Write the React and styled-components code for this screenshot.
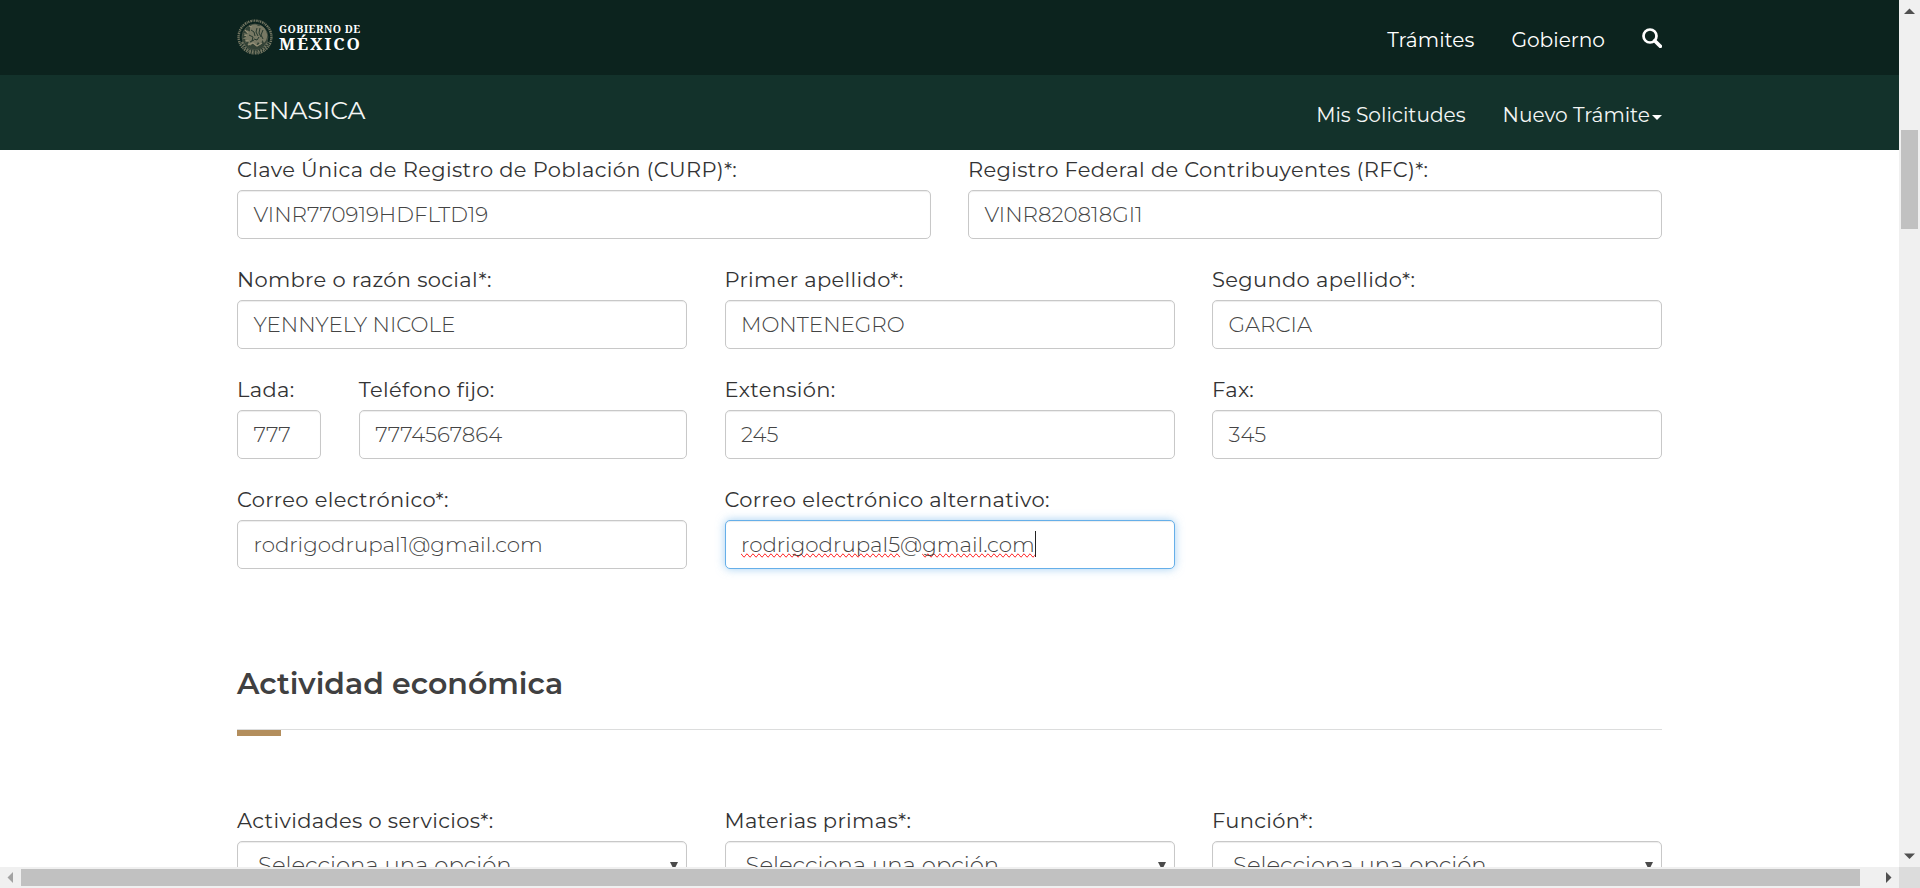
import React from 'react';
import styled, { createGlobalStyle, css } from 'styled-components';

const GlobalStyle = createGlobalStyle`
  *, *::before, *::after { box-sizing: border-box; }
  body {
    margin: 0;
    background: #fff;
    color: #404041;
    font-family: Montserrat, Inter, "Liberation Sans", sans-serif;
    overflow: hidden;
  }
`;

const tracked = css`
  letter-spacing: ${({ $track = 0 }) => $track}px;
  white-space: nowrap;
`;

const Screen = styled.div`
  display: grid;
  grid-template-columns: minmax(0, 1fr) 21px;
  grid-template-rows: minmax(0, 1fr) 21px;
  width: 100vw;
  height: 100vh;
`;

const Viewport = styled.div`
  overflow: hidden;
`;

const Container = styled.div`
  width: 1425px;
  margin: 0 auto;
`;

const TopBar = styled.header`
  height: 75px;
  background: #0c231e;
`;

const SubBar = styled.div`
  height: 75px;
  background: #13322b;
`;

const BarInner = styled(Container)`
  display: flex;
  justify-content: space-between;
  height: 100%;
`;

const Logo = styled.div`
  display: flex;
  align-items: center;
  gap: 6px;
  height: 74px;
`;

const LogoText = styled.div`
  display: flex;
  flex-direction: column;
  color: #fff;
  font-family: "Noto Serif", "DejaVu Serif", serif;
  font-weight: 700;
`;

const LogoTop = styled.span`
  ${tracked}
  font-size: 10.5px;
  line-height: 12px;
`;

const LogoBottom = styled.span`
  ${tracked}
  font-size: 17px;
  line-height: 17px;
`;

const Nav = styled.nav`
  display: flex;
  align-items: flex-start;
  gap: 37px;
  padding-top: 26px;
`;

const NavLink = styled.a`
  ${tracked}
  display: flex;
  align-items: center;
  gap: 2px;
  color: ${({ $dim }) => ($dim ? '#f4f6f5' : '#fff')};
  font-size: 20.15px;
  line-height: 27px;
`;

const SearchIcon = styled.svg`
  width: 20px;
  height: 20px;
  margin-top: 2px;
`;

const Caret = styled.span`
  margin-top: 5px;
  border: 5px solid transparent;
  border-top-color: #fff;
  border-bottom: 0;
`;

const Brand = styled.div`
  padding-top: 19px;
  color: #f4f6f5;
  font-size: 25px;
  line-height: 32px;
`;

const Form = styled(Container).attrs({ as: 'main' })`
  display: block;
  padding-top: 6px;
`;

const Rows = styled.div`
  display: flex;
  flex-direction: column;
  gap: 27px;
`;

const Row = styled.div`
  display: grid;
  grid-template-columns: ${({ $cols }) => $cols};
  justify-content: space-between;
`;

const FieldBox = styled.div`
  min-width: 0;
`;

const Label = styled.label`
  display: block;
  margin-bottom: 7px;
  color: #333334;
  font-size: 21px;
  letter-spacing: 0.34px;
  line-height: 27px;
  white-space: nowrap;
`;

const Control = styled.div`
  display: flex;
  align-items: center;
  height: 49px;
  padding: 0 9px 0 ${({ $select }) => ($select ? 20 : 15.5)}px;
  border: 1px solid ${({ $focused }) => ($focused ? '#66afe9' : '#c8c8c8')};
  border-radius: 5px;
  background: #fff;
  box-shadow: inset 0 1px 1px rgba(0, 0, 0, 0.075)
    ${({ $focused }) => $focused && ', 0 0 10px rgba(102, 175, 233, 0.6)'};
  color: #444;
  font-size: ${({ $select }) => ($select ? 22.8 : 21.4)}px;
  font-weight: 300;
  line-height: 27px;
  white-space: nowrap;
`;

const Misspelled = styled.span`
  text-decoration-line: spelling-error;
`;

const TextCursor = styled.span`
  width: 1px;
  height: 26px;
  margin-top: -2px;
  background: #222;
`;

const SelectArrow = styled.span`
  margin: 0 -1px 0 auto;
  border: 4px solid transparent;
  border-top: 8px solid #4a4a4a;
  border-bottom: 0;
`;

const SectionTitle = styled.h3`
  position: relative;
  margin: 95px 0 77px;
  padding-bottom: 25px;
  border-bottom: 1px solid #dcdddd;
  font-size: 30px;
  font-weight: 600;
  line-height: 40px;

  &::after {
    content: '';
    position: absolute;
    left: 0;
    top: 66px;
    width: 44px;
    height: 6px;
    background: #b38e5d;
  }
`;

const ScrollTrack = styled.div`
  display: flex;
  flex-direction: ${({ $vertical }) => ($vertical ? 'column' : 'row')};
  align-items: center;
  background: #f0f0f0;
`;

const ScrollButton = styled.svg`
  flex: none;
  width: 21px;
  height: 21px;
  fill: ${({ $off }) => ($off ? '#a3a3a3' : '#505050')};
`;

const ThumbLane = styled.div`
  flex: 1;
  display: flex;
  padding: ${({ $vertical }) => ($vertical ? '109px 0 0' : '0')};
`;

const Thumb = styled.div`
  width: ${({ $w }) => $w}px;
  height: ${({ $h }) => $h}px;
  background: #c1c1c1;
`;

const Corner = styled.div`
  background: #dcdcdc;
`;

const Emblem = () => (
  <svg width="36" height="36" viewBox="0 0 36 36" fill="none" stroke="#969178">
    <circle cx="18" cy="18" r="12.500" fill="#6f7059" stroke="none" opacity=".4" />
    <circle cx="18" cy="18" r="16.400" strokeWidth="2.400" strokeDasharray="1.600 .7 .9 .6 1.300 .9" opacity=".75" />
    <circle cx="18" cy="18" r="12.900" strokeWidth=".8" opacity=".5" />
    <path d="M5 23c3 7 7.500 9.500 13 9.500s10-2.500 13-9.500" strokeWidth="2.200" strokeDasharray="2 .8" opacity=".7" />
    <path
      d="M13 8c2-3 6-3 8-1l3-.500c3 1.500 5.500 5 6 8.500s-.5 7-3 9l-1.500-3-2 5-2.500-3-2 4-3-3-2.500 2.500-3-1 1.500-3-4 1 1.500-3-4-1 4-2-3-3.500 4 1-1-4 3.500 1.500z"
      fill="#969178" stroke="none" opacity=".7"
    />
    <path
      d="M8 11l3 3M7 16l3 1M8 21l4 1M11 26l5-2 4 3 5-3M12 7l3 1"
      strokeWidth="1.100"
    />
    <path
      d="M14 11l3 2 1 4M20 9l-1 4 2 4M23 9l-1 5 2 4M26 11l-2 5 2 4M12 16l4 2-1 4M17 20l3 1 2-3M13 23l4-2"
      stroke="#1d3128" strokeWidth=".9"
    />
  </svg>
);

function Field({ label, value, select, focused, children }) {
  return (
    <FieldBox>
      <Label>{label}</Label>
      <Control $select={select} $focused={focused}>
        {children || value}
        {select && <SelectArrow />}
      </Control>
    </FieldBox>
  );
}

const HALVES = '694px 694px';
const THIRDS = 'repeat(3, 450px)';
const PHONES = '84.4px 328.4px 450px 450px';

export default function App() {
  return (
    <>
      <GlobalStyle />
      <Screen>
        <Viewport>
          <TopBar>
            <BarInner>
              <Logo>
                <Emblem />
                <LogoText>
                  <LogoTop $track={0.5}>GOBIERNO DE</LogoTop>
                  <LogoBottom $track={1.9}>MÉXICO</LogoBottom>
                </LogoText>
              </Logo>
              <Nav>
                <NavLink $track={0.05}>Trámites</NavLink>
                <NavLink>Gobierno</NavLink>
                <SearchIcon viewBox="0 0 20 20" fill="none" stroke="#fff">
                  <circle cx="8" cy="8" r="6.500" strokeWidth="2.700" />
                  <path d="M12.700 12.700l5.600 5.600" strokeWidth="3.700" strokeLinecap="round" />
                </SearchIcon>
              </Nav>
            </BarInner>
          </TopBar>
          <SubBar>
            <BarInner>
              <Brand>SENASICA</Brand>
              <Nav>
                <NavLink $dim>Mis Solicitudes</NavLink>
                <NavLink $dim>
                  Nuevo Trámite
                  <Caret />
                </NavLink>
              </Nav>
            </BarInner>
          </SubBar>

          <Form>
            <Rows>
              <Row $cols={HALVES}>
                <Field label="Clave Única de Registro de Población (CURP)*:" value="VINR770919HDFLTD19" />
                <Field label="Registro Federal de Contribuyentes (RFC)*:" value="VINR820818GI1" />
              </Row>
              <Row $cols={THIRDS}>
                <Field label="Nombre o razón social*:" value="YENNYELY NICOLE" />
                <Field label="Primer apellido*:" value="MONTENEGRO" />
                <Field label="Segundo apellido*:" value="GARCIA" />
              </Row>
              <Row $cols={PHONES}>
                <Field label="Lada:" value="777" />
                <Field label="Teléfono fijo:" value="7774567864" />
                <Field label="Extensión:" value="245" />
                <Field label="Fax:" value="345" />
              </Row>
              <Row $cols={THIRDS}>
                <Field label="Correo electrónico*:" value="rodrigodrupal1@gmail.com" />
                <Field label="Correo electrónico alternativo:" focused>
                  <span>
                    <Misspelled>rodrigodrupal5</Misspelled>@<Misspelled>gmail.com</Misspelled>
                  </span>
                  <TextCursor />
                </Field>
              </Row>
            </Rows>

            <SectionTitle>Actividad económica</SectionTitle>

            <Row $cols={THIRDS}>
              <Field label="Actividades o servicios*:" value="Selecciona una opción" select />
              <Field label="Materias primas*:" value="Selecciona una opción" select />
              <Field label="Función*:" value="Selecciona una opción" select />
            </Row>
          </Form>
        </Viewport>

        <ScrollTrack $vertical>
          <ScrollButton viewBox="0 0 21 21"><path d="M5 14l5.500-5.500L16 14z" /></ScrollButton>
          <ThumbLane $vertical><Thumb $w={17} $h={99} /></ThumbLane>
          <ScrollButton viewBox="0 0 21 21"><path d="M5 7.500l5.500 5.500L16 7.500z" /></ScrollButton>
        </ScrollTrack>
        <ScrollTrack>
          <ScrollButton $off viewBox="0 0 21 21"><path d="M13 5v11l-5.500-5.500z" /></ScrollButton>
          <ThumbLane><Thumb $w={1839} $h={17} /></ThumbLane>
          <ScrollButton viewBox="0 0 21 21"><path d="M8 5v11l5.500-5.500z" /></ScrollButton>
        </ScrollTrack>
        <Corner />
      </Screen>
    </>
  );
}
